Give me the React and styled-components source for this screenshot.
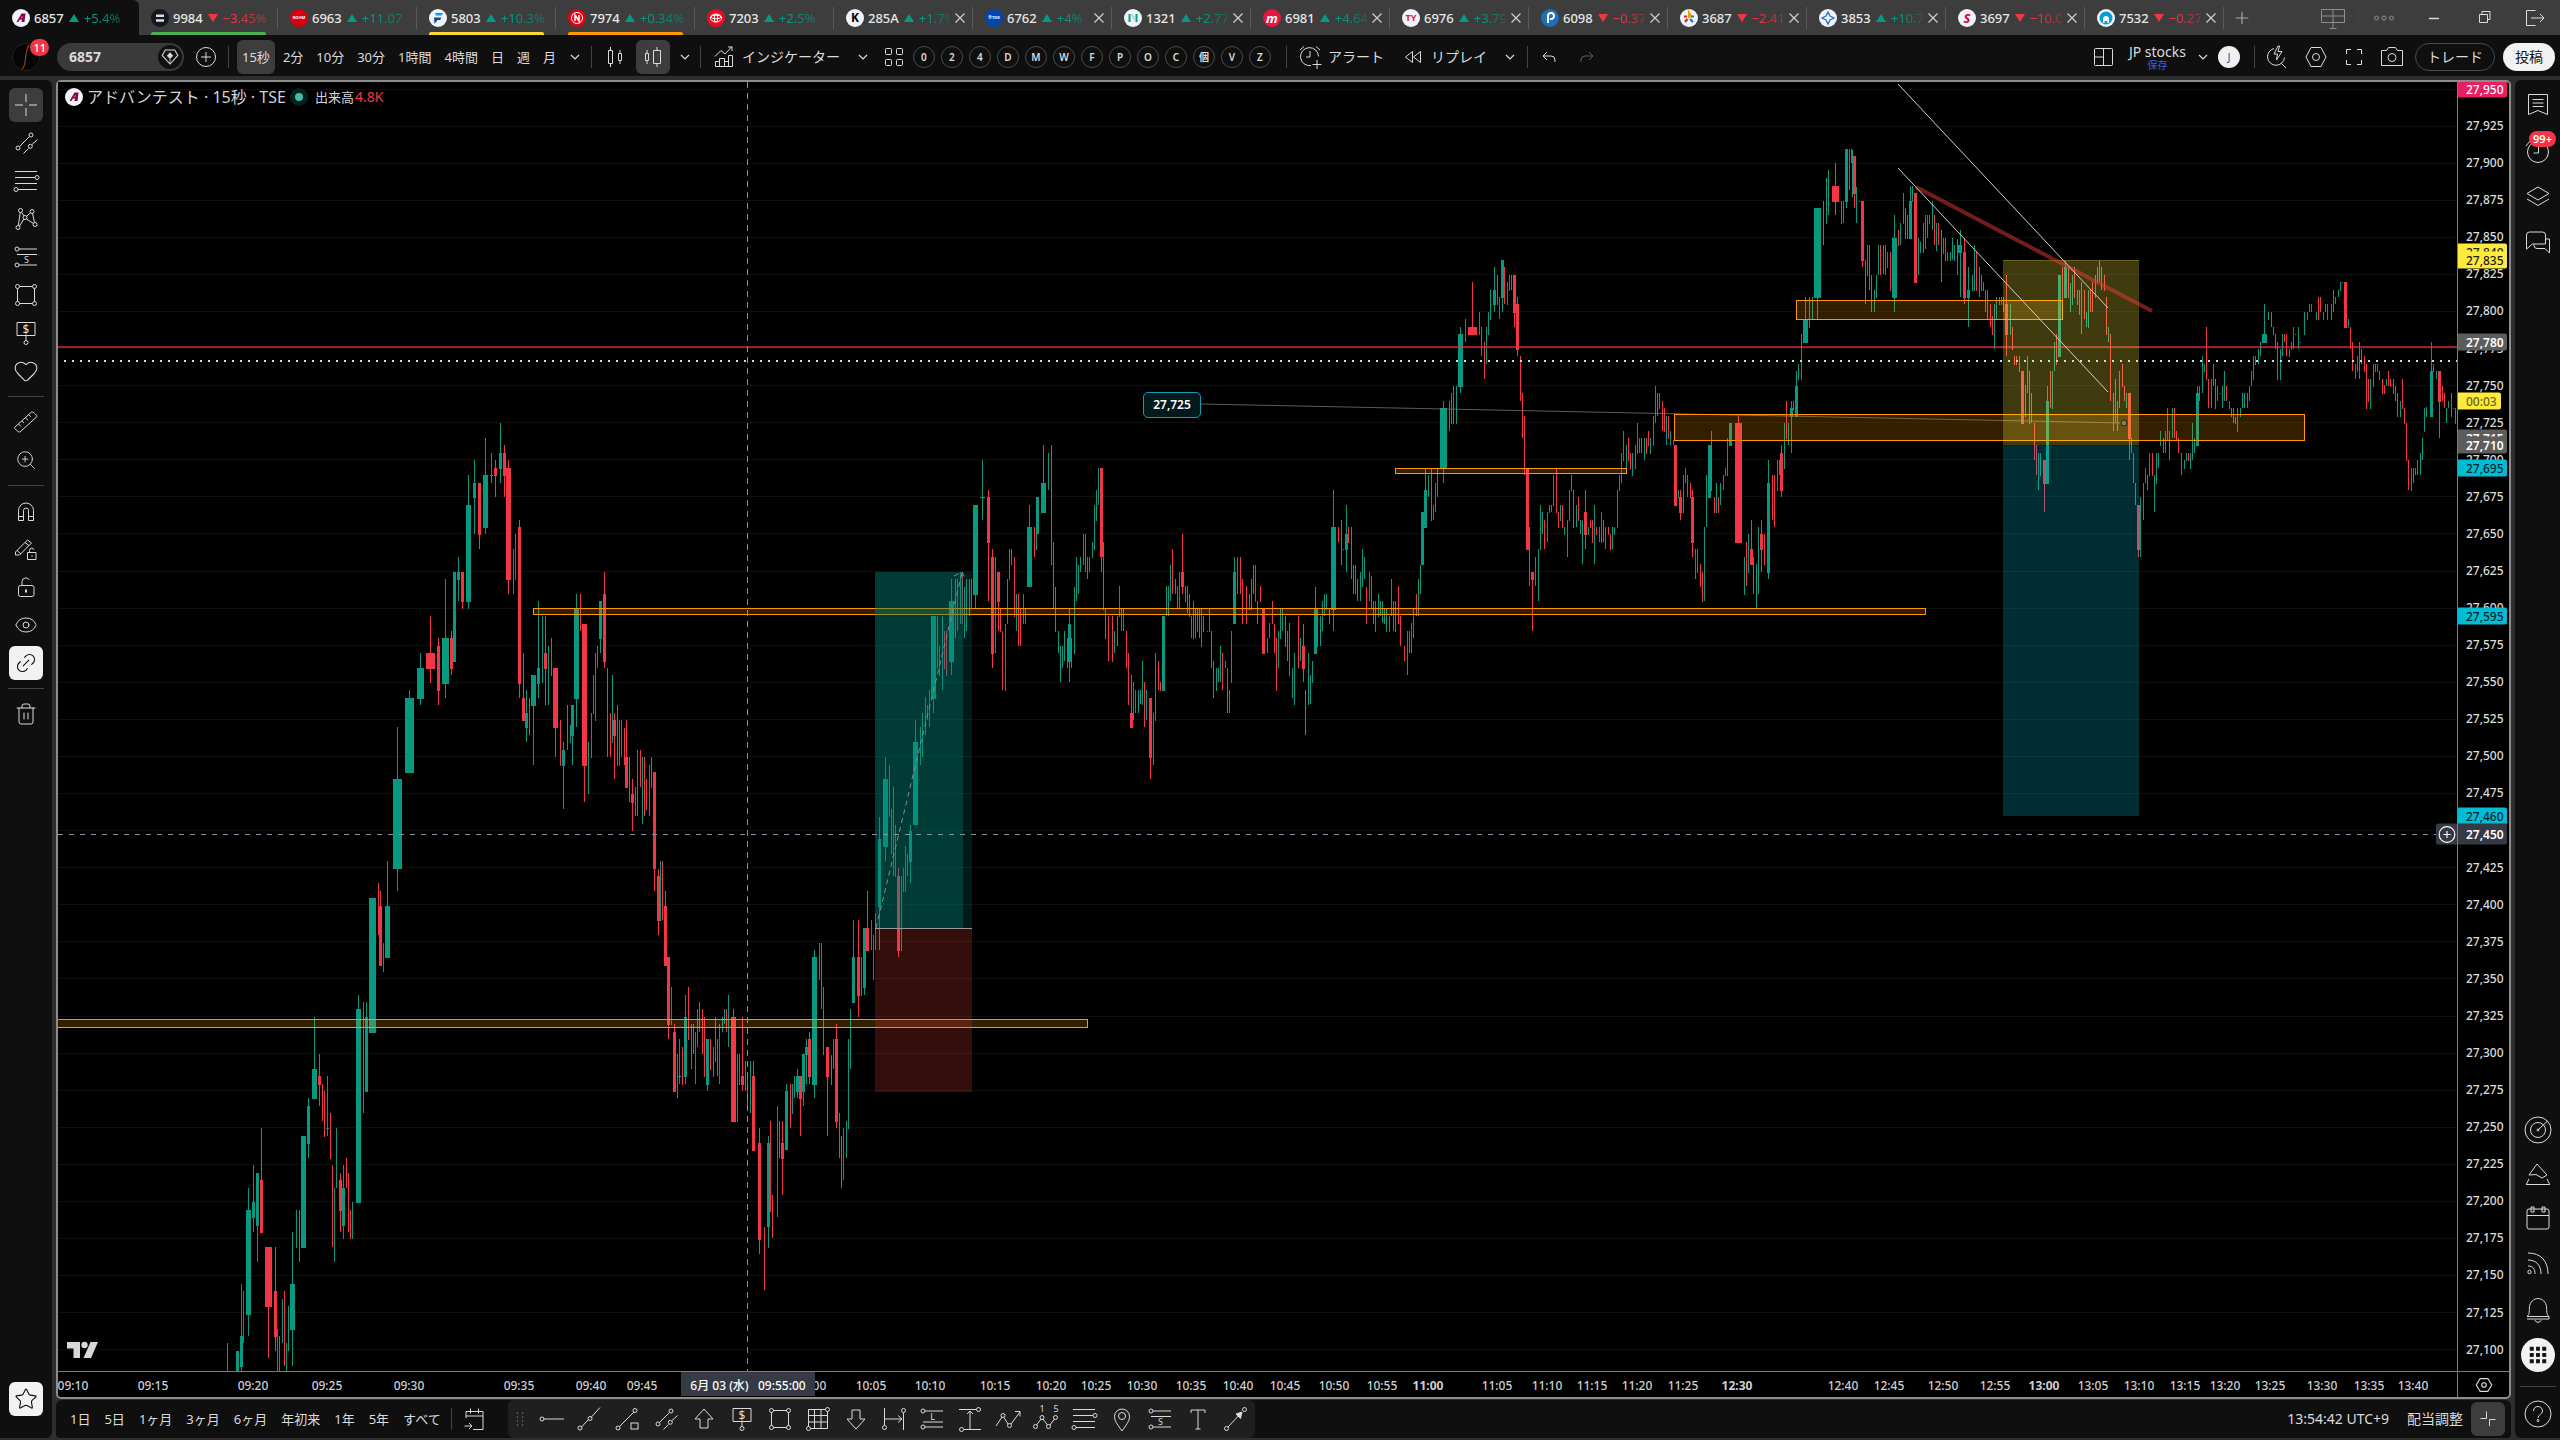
import React from "react";
import styled, { createGlobalStyle, css } from "styled-components";
import { Heart, Link2, Eye, ZoomIn, Trash2, Star } from "lucide-react";

const Global = createGlobalStyle`
  * { box-sizing: border-box; }
  body { margin: 0; background: #2e2e2e; color: #dbdbdb; overflow: hidden;
    font-family: "Noto Sans", "Noto Sans CJK JP", sans-serif; font-size: 14px; line-height: 20px; }
  button { font: inherit; color: inherit; background: none; border: 0; padding: 0; cursor: pointer; }
`;

const GREEN = "#089981";
const RED = "#f23645";

const Page = styled.div`display: flex; flex-direction: column; height: 100vh; width: 100%;`;

/* ---------- tab strip ---------- */
const TabStrip = styled.nav`display: flex; flex: none; height: 35px; background: #3d3d3d; align-items: stretch;`;
const Tab = styled.div`
  position: relative; width: 139px; flex: 0 1 139px; display: flex; align-items: center; gap: 4px;
  padding: 0 6px 0 12px; overflow: hidden; white-space: nowrap;
  ${(p) => p.$active && css`background: #0f0f0f; border-radius: 0 6px 0 0;`}
  ${(p) => p.$line && css`&::before { content: ""; position: absolute; right: 0; top: 7px; bottom: 6px; width: 1px; background: #5a5a5a; }`}
  ${(p) => p.$mark && css`&::after { content: ""; position: absolute; left: 12px; right: 12px; bottom: 0; height: 3px; border-radius: 2px 2px 0 0; background: ${p.$mark}; }`}
`;
const TabCode = styled.span`font-size: 13px; font-weight: 500; color: #e8e8e8;`;
const Arrow = styled.span`
  flex: none; width: 0; height: 0; margin: 0 1px; border: 5px solid transparent;
  ${(p) => (p.$up ? css`border-bottom: 8px solid ${GREEN}; border-top: 0;` : css`border-top: 8px solid ${RED}; border-bottom: 0;`)}
`;
const Change = styled.span`
  flex: 1; min-width: 0; overflow: hidden; font-size: 13px; color: ${(p) => (p.$up ? GREEN : RED)};
  mask-image: linear-gradient(90deg, #000 20%, rgba(0,0,0,.4) 100%);
`;
const Close = styled.button`flex: none; width: 14px; height: 20px; display: grid; place-items: center; color: #d0d0d0;`;
const StripEnd = styled.div`flex: 1; display: flex; align-items: center; justify-content: space-between; padding: 0 1px 0 10px; color: #a8a8a8;`;
const WindowKeys = styled.div`display: flex; align-items: center;`;
const WindowKey = styled.button`width: 50px; height: 35px; display: grid; place-items: center; color: ${(p) => (p.$dim ? "#8f8f8f" : "#dcdcdc")};`;
const Rule = styled.span`flex: none; width: 1px; height: 22px; background: #434343; margin: 0 ${(p) => p.$gap ?? 0}px;`;

/* ---------- main toolbar ---------- */
const Toolbar = styled.header`flex: none; height: 41px; display: flex; align-items: center; background: #0f0f0f; padding: 2px 5px 0 12px;`;
const Avatar = styled.button`position: relative; width: 28px; height: 28px; border-radius: 50%; background: #050505; border: 1px solid #222; display: grid; place-items: center; margin-right: 17px;`;
const Count = styled.span`
  position: absolute; top: -5px; right: -10px; min-width: 18px; height: 17px; padding: 0 3px; border-radius: 9px;
  background: ${RED}; color: #fff; font-size: 11px; line-height: 17px; font-weight: 500; text-align: center;
`;
const Search = styled.button`
  width: 127px; height: 28px; border-radius: 14px; background: #3a3a3a; display: flex; align-items: center;
  justify-content: space-between; padding: 0 2px 0 12px; font-size: 14px; font-weight: 700;
`;
const Knob = styled.span`width: 24px; height: 24px; border-radius: 50%; background: #111; display: grid; place-items: center;`;
const IconKey = styled.button`flex: none; width: ${(p) => p.$w ?? 38}px; height: 34px; display: grid; place-items: center; border-radius: 6px; background: ${(p) => (p.$on ? "#3d3d3d" : "none")}; color: ${(p) => (p.$dim ? "#5c5c5c" : "#dbdbdb")};`;
const Intervals = styled.div`display: flex; gap: 3px; margin-left: 8px;`;
const Interval = styled.button`flex: none; height: 34px; padding: 0 5px; border-radius: 6px; background: ${(p) => (p.$on ? "#3d3d3d" : "none")}; font-size: 13px; white-space: nowrap;`;
const TextKey = styled.button`flex: none; height: 34px; font-size: 14px; white-space: nowrap; display: flex; align-items: center; gap: 4px; padding: 0 6px 0 9px;`;
const Rounds = styled.div`display: flex; gap: 6px; margin: 0 15px 0 5px;`;
const Round = styled.button`width: 22px; height: 22px; border: 1px solid #4a4a4a; border-radius: 50%; font-size: 10px; line-height: 18px; font-weight: 600;`;
const Grow = styled.div`flex: 1;`;
const LayoutName = styled.button`display: flex; flex-direction: column; align-items: center; font-size: 14px; line-height: 16px; padding: 0 6px;`;
const Saved = styled.span`font-size: 10px; line-height: 10px; color: #2962ff;`;
const Initial = styled.span`width: 22px; height: 22px; margin: 0 14px 0 4px; border-radius: 50%; background: #f0f0f0; color: #1e5fa8; font-size: 11px; line-height: 22px; text-align: center;`;
const Pill = styled.button`
  height: 28px; border-radius: 14px; width: ${(p) => p.$w}px; font-size: 14px; line-height: 26px; margin-left: ${(p) => p.$gap ?? 0}px;
  ${(p) => (p.$solid ? css`background: #f2f2f2; color: #0f0f0f;` : css`border: 1px solid #4a4a4a;`)}
`;

/* ---------- body ---------- */
const Body = styled.div`flex: 1; min-height: 0; display: flex; gap: 4px; padding: 4px 0 2px; background: #2e2e2e;`;
const Side = styled.aside`
  flex: none; width: ${(p) => p.$w}px; display: flex; flex-direction: column; align-items: center; background: #0f0f0f;
  border-radius: ${(p) => (p.$left ? "0 6px 6px 0" : "6px 0 0 6px")}; padding: ${(p) => p.$pad};
`;
const ToolGroup = styled.div`display: flex; flex-direction: column; gap: 4px;`;
const Tool = styled.button`
  width: 34px; height: 34px; display: grid; place-items: center; border-radius: 6px; position: relative;
  ${(p) => p.$on && css`background: #3d3d3d;`}
  ${(p) => p.$white && css`background: #f2f2f2; color: #0f0f0f;`}
`;
const Divider = styled.hr`width: 36px; height: 1px; border: 0; background: #434343; margin: 8px 0;`;
const Widget = styled.button`position: relative; width: 45px; height: ${(p) => p.$h ?? 46}px; display: grid; place-items: center;`;
const Badge = styled.span`position: absolute; left: 14px; top: 3px; width: 27px; height: 16px; border-radius: 8px; background: ${RED}; color: #fff; font-size: 11px; line-height: 16px; font-weight: 600; text-align: center;`;
const AppsDisc = styled.span`width: 34px; height: 34px; border-radius: 50%; background: #f2f2f2; color: #0f0f0f; display: grid; place-items: center;`;

const Center = styled.main`flex: 1; min-width: 0; display: flex; flex-direction: column; gap: 1px;`;
const Frame = styled.section`flex: 1; min-height: 0; border: 2px solid #8c8c8c; border-radius: 5px; background: #000; display: grid; grid-template: 1fr 26px / 1fr 52px;`;
const Plot = styled.div`position: relative; min-width: 0; min-height: 0; overflow: hidden; background: #000;`;
const PlotSvg = styled.svg`position: absolute; inset: 0; width: 100%; height: 100%; display: block;`;
const Legend = styled.div`position: relative; display: flex; align-items: center; gap: 4px; padding: 0 7px; color: #d1d4dc; font-size: 16px; height: 30px;`;
const Status = styled.span`width: 18px; height: 18px; border-radius: 50%; background: #04221d; display: grid; place-items: center; margin-right: 3px; &::after { content: ""; width: 8px; height: 8px; border-radius: 50%; background: #42bda8; }`;
const Volume = styled.span`font-size: 13px; em { font-style: normal; font-size: 14px; color: ${RED}; margin-left: 1px; }`;
const Callout = styled.div`position: absolute; width: 58px; height: 26px; border: 1px solid #0f9fb4; border-radius: 5px; background: #04191c; color: #fff; font-size: 12px; line-height: 24px; font-weight: 600; text-align: center;`;
const Watermark = styled.svg`position: absolute; left: 8px; bottom: 11px;`;

const PriceAxis = styled.div`
  position: relative; border-left: 1px solid #7b7b7b; display: flex; flex-direction: column; justify-content: space-between;
  padding: 36px 0 13px 8px; font-size: 12px; line-height: 16px; font-weight: 500; color: #dbdbdb; overflow: hidden;
`;
const Tag = styled.span`
  position: absolute; left: 0; transform: translateY(-50%); width: ${(p) => p.$w ?? 49}px; height: ${(p) => p.$h ?? 17}px; line-height: ${(p) => p.$h ?? 17}px;
  padding-left: 8px; background: ${(p) => p.$bg}; color: ${(p) => p.$fg}; border-radius: 0 2px 2px 0; font-weight: ${(p) => (p.$strong ? 600 : 500)};
`;
const AddAlert = styled.button`position: absolute; right: 0; transform: translateY(-50%); width: 21px; height: 21px; background: #363a45; border-radius: 2px 0 0 2px; display: grid; place-items: center; && { color: #fff; }`;
const TimeAxis = styled.div`position: relative; border-top: 1px solid #7b7b7b; font-size: 12px; line-height: 27px; font-weight: 500; color: #cfcfcf; overflow: hidden;`;
const TimeLabel = styled.span`position: absolute; top: 0; transform: translateX(-50%); font-weight: ${(p) => (p.$strong ? 700 : 500)};`;
const TimeTag = styled.span`position: absolute; top: 0; transform: translateX(-50%); width: 134px; height: 24px; line-height: 27px; background: #363a45; color: #fff; text-align: center; white-space: pre;`;
const Corner = styled.button`&& { border-top: 1px solid #7b7b7b; border-left: 1px solid #7b7b7b; } display: grid; place-items: center;`;

const Footer = styled.footer`flex: none; height: 38px; display: flex; align-items: center; background: #0f0f0f; border-radius: 6px 6px 4px 4px; font-size: 13px; padding: 0 6px 0 14px;`;
const Ranges = styled.div`display: flex; gap: 14px; margin-right: 2px;`;
const Favourites = styled.div`display: flex; align-items: center; height: 38px; background: #1f1f1f; border-radius: 6px; margin-left: 18px; padding-left: 6px;`;
const Handle = styled.span`display: grid; width: 14px; margin-right: 5px; color: #777;`;
const FootText = styled.button`margin-right: ${(p) => p.$gap}px; font-size: 14px;`;

/* ---------- icons ---------- */
const Ico = ({ s = 28, w = 1, children, f = "none" }) => (
  <svg width={s} height={s} viewBox="0 0 28 28" fill={f} stroke="currentColor" strokeWidth={w} aria-hidden="true">{children}</svg>
);
const C = ({ x, y, r = 2 }) => <circle cx={x} cy={y} r={r} />;
const Glyph = ({ x, y, size = 11, children }) => (
  <text x={x} y={y} fontSize={size} textAnchor="middle" fill="currentColor" stroke="none">{children}</text>
);
const Chevron = () => <Ico s={14}><path d="M6 10l8 8 8-8" strokeWidth="2.4" /></Ico>;

const I = {
  cross: <Ico><path d="M14 3v8M14 17v8M3 14h8M17 14h8" /></Ico>,
  trend: <Ico><C x={6} y={19} /><C x={19} y={6} /><path d="M7.500 17.500l10-10M11.500 24.500l5-5M20 15.500l5.500-5" /><C x={18.300} y={17.300} /></Ico>,
  fib: <Ico><path d="M3 4.500h22M3 10.500h20M3 16.500h22M6 22.500h19" /><C x={25} y={10.500} /><C x={4} y={22.500} /></Ico>,
  xabcd: <Ico><C x={6} y={22.500} /><C x={8.500} y={5.500} /><C x={20} y={6.500} /><C x={23} y={19.500} /><C x={13} y={12.500} /><path d="M6.300 20.500l2-13M7.500 21l4.500-7M9.500 7.200l2.500 3.800M14.500 11.300l4-3.500M20.500 8.500l2 9M14.500 14l7 4.500" /></Ico>,
  forecast: <Ico><path d="M7 6h18M5 11.500h20M7 22h18" /><C x={5} y={6} /><C x={5} y={22} /><Glyph x={14.500} y={20} size={9}>S</Glyph></Ico>,
  forecastL: <Ico><path d="M7 6h18M5 17h20M7 22h18" /><C x={5} y={6} /><C x={5} y={22} /><Glyph x={14.500} y={15} size={9}>L</Glyph></Ico>,
  rect: <Ico><path d="M7.500 5.500h13M7.500 22.500h13M5.500 7.500v13M22.500 7.500v13" /><C x={5.500} y={5.500} /><C x={22.500} y={5.500} /><C x={5.500} y={22.500} /><C x={22.500} y={22.500} /></Ico>,
  note: <Ico><path d="M5 3.500h18v13h-18zM14 16.500v5" /><C x={14} y={23.500} /><Glyph x={14} y={14.500} size={12}>$</Glyph></Ico>,
  ruler: <Ico><path d="M2.500 19.500l17-15.500c1-.8 5 2.500 5.500 4.500l-17 15.500c-1 .8-5.500-3-5.500-4.500zM6.500 16l2.500 2.500M10 13l2 2M13.500 9.800l2.500 2.500M16.800 6.800l2 2" /></Ico>,
  magnet: <Ico><path d="M6.500 23.500v-10a7.500 7.500 0 0 1 15 0v10h-5v-10a2.500 2.500 0 0 0-5 0v10zM6.500 19.500h5M16.500 19.500h5" /></Ico>,
  pencil: <Ico><path d="M3.500 17l12-12 4 3-12 12h-4zM13 7.500l4 3M5 15.500l4 3.500" /><path d="M15.500 17.500h8.500v7h-8.500zM17.500 17.500v-2a2.300 2.300 0 0 1 4.500-.7M20 20.500v1.500" /></Ico>,
  lock: <Ico><rect x="6.500" y="12.500" width="15.500" height="11" rx="2" /><path d="M10 12.500v-4a4 4 0 0 1 7.500-1.500" /><path d="M14 16.500v3" strokeWidth="2" /></Ico>,
  hline: <Ico><path d="M6 14h20" /><C x={4} y={14} /></Ico>,
  ray: <Ico><path d="M5.500 22l7-7.500M15 12.500l9-10" /><C x={4} y={23} /><C x={14} y={13.500} /></Ico>,
  alertline: <Ico><path d="M5.500 21.500l14.500-14.500" /><C x={4} y={23} /><C x={21} y={5.500} /><rect x="17" y="18" width="7" height="6" /></Ico>,
  up: <Ico><path d="M14 4l9 10h-5v9h-8v-9h-5z" /></Ico>,
  down: <Ico><path d="M14 24l9-10h-5v-9h-8v9h-5z" /></Ico>,
  grid: <Ico><path d="M4.500 4.500h17M4.500 4.500v17M23.500 6.500v17M6.500 23.500h17M10.500 4.500v19M17 4.500v19M4.500 10.500h19M4.500 17h19" /><C x={23.500} y={4.500} /><C x={4.500} y={23.500} /></Ico>,
  daterange: <Ico><path d="M4.500 3v17M23.500 8v17M5 14h17M18 10.500l4 3.500-4 3.500" /><C x={4.500} y={22.500} /><C x={23.500} y={5.500} /></Ico>,
  pricerange: <Ico><path d="M3 4.500h17M8 24.500h17M14 24v-18M11 9l3-3 3 3" /><C x={22.500} y={4.500} /><C x={5.500} y={24.500} /></Ico>,
  zig: <Ico><path d="M2 21l6-9M10 12.500l4 6.500M17 19l9-12M21 6.500h5v5" /><C x={9} y={10.500} /><C x={15.500} y={20.500} /></Ico>,
  elliott: <Ico><C x={3.500} y={21.500} /><C x={10} y={12.500} /><C x={16.500} y={21.500} /><C x={23.500} y={12.500} /><path d="M4.500 20l4.500-6M11 14l4.500 6M18 20l4.500-6" /><Glyph x={10} y={7} size={9}>1</Glyph><Glyph x={24} y={7} size={9}>5</Glyph></Ico>,
  pin: <Ico><path d="M14 26c-4-6-7.500-9.500-7.500-14.500a7.500 7.500 0 0 1 15 0c0 5-3.500 8.500-7.500 14.500z" /><C x={14} y={11} r={3.500} /></Ico>,
  text: <Ico><path d="M7 8v-3h14v3M14 5v19M11.500 24h5" /></Ico>,
  arrow: <Ico><path d="M6 22l14-15" /><path d="M14 9l6-2-1.500 6.500z" fill="currentColor" /><C x={4.500} y={23.500} /><C x={22.500} y={4.500} /></Ico>,
  candles: <Ico><path d="M7.500 7.500h4v13h-4zM9.500 4v3.500M9.500 20.500v3.500M17.500 10.500h3v7h-3zM19 7v3.500M19 17.500v3.500" /></Ico>,
  hollow: <Ico><path d="M6.500 10.500h3v7h-3zM8 7v3.500M8 17.500v3.500M14.500 7.500h7v13h-7zM18 4v3.500M18 20.500v3.500" /></Ico>,
  indicators: <Ico><path d="M5.500 23.500v-5h4v-3h5v3h4v-6h4v11zM9.500 18.500v5M14.500 17.500v6M18.500 17.500v6M5 13.500l6-6 4 3.500 7-7.500M18 4h4v4" /></Ico>,
  apps: <Ico><rect x="5.500" y="5.500" width="6" height="6" rx="1" /><rect x="16.500" y="5.500" width="6" height="6" rx="1" /><rect x="5.500" y="16.500" width="6" height="6" rx="1" /><rect x="16.500" y="16.500" width="6" height="6" rx="1" /></Ico>,
  alarm: <Ico><path d="M15 22.500a9 9 0 1 1 7.500-9M14 8v6h-4M4 7l4-3.500M20 3.500l4 3.500M21 17v9M16.500 21.500h9" /></Ico>,
  rewind: <Ico><path d="M13.500 8.500v11l-7-5.500zM21.500 8.500v11l-7-5.500z" /></Ico>,
  undo: <Ico><path d="M12 9l-4 4 4 4M8 13h8a4 4 0 0 1 4 4v2" /></Ico>,
  redo: <Ico><path d="M16 9l4 4-4 4M20 13h-8a4 4 0 0 0-4 4v2" /></Ico>,
  layout: <Ico><rect x="4.500" y="5.500" width="18" height="17" rx="1" /><path d="M13.500 5.500v17M4.500 14h9" /></Ico>,
  quick: <Ico><path d="M12 5.500a8.500 8.500 0 1 0 10.500 9M19.500 20.500l4.500 4.500M16 3l-4 8h3.500l-1 6 5.500-8.500h-4l1.500-5.500z" /></Ico>,
  gear: <Ico><path d="M9 4.500h10l5 9.500-5 9.500h-10l-5-9.500z" /><C x={14} y={14} r={3.500} /></Ico>,
  full: <Ico><path d="M6.500 11v-4.500h4.500M17 6.500h4.500v4.500M21.500 17v4.500h-4.500M11 21.500h-4.500v-4.500" /></Ico>,
  camera: <Ico><path d="M3.500 7.500h5l2-3h7l2 3h5v15h-21z" /><C x={14} y={14.500} r={4} /></Ico>,
  plusc: <Ico><C x={14} y={14} r={9.500} /><path d="M14 9v10M9 14h10" /></Ico>,
  diamond: <Ico s={22}><path d="M8 5h12l4 7-10 11-10-11z" strokeWidth="1.300" /><path d="M14 8.500l3.500 4-3.500 3.500-3.500-3.500zM14 16v6" fill="currentColor" /></Ico>,
  list: <Ico><path d="M4.500 3.500h19v20l-9.500-4-9.500 4zM8.500 8.500h11M8.500 12h11M8.500 15.500h11" /></Ico>,
  clock: <Ico><C x={14} y={15} r={10.500} /><path d="M14.500 9v7h-5M2 9l4-5" /></Ico>,
  layers: <Ico><path d="M14 4l11 6.500-11 6.500-11-6.500zM3 16l11 6.500 11-6.500" /></Ico>,
  chat: <Ico><path d="M2.500 20v-14a3 3 0 0 1 3-3h13a3 3 0 0 1 3 3v9h-13zM10 15v1.500a3 3 0 0 0 3 3h8l4.500 4.500v-14h-4" /></Ico>,
  radar: <Ico><C x={14} y={14} r={13} /><C x={14} y={14} r={7.500} /><C x={14} y={14} r={1} /><path d="M14 14l9.500-9" /></Ico>,
  ideas: <Ico><path d="M2 24.500h24M5 19l-2.500 5M23 19l2.500 5M5 15l8-11 10 11-5 3-6-3.500z" /></Ico>,
  calendar: <Ico><rect x="3" y="5" width="22" height="20" rx="2" /><path d="M3 11.500h22M7 3h3v5h-3zM18 3h3v5h-3z" /></Ico>,
  rss: <Ico><C x={5.500} y={23} r={1.700} /><path d="M4 17c5 0 7 3 7 8M4 11c8 0 13 5 13 14M4 4c13 0 20 8 20 21" /></Ico>,
  bell: <Ico><path d="M3 21.500c3-2 2-6 2.500-10 .5-4 4-8 8.500-8s8 4 8.500 8c.5 4-.5 8 2.500 10zM3 24h22v-2.500M11 25c.5 3 5.500 3 6 0" /></Ico>,
  dots: <Ico s={22} f="currentColor">{[4, 12, 20].map((y) => [4, 12, 20].map((x) => <rect key={x + "-" + y} x={x} y={y} width="4" height="4" />))}</Ico>,
  help: <Ico><C x={14} y={14} r={13} /><path d="M9.500 11c0-6 9-6 9 0 0 3.500-4.500 3.500-4.500 7" /><C x={14} y={20.500} r={1} /></Ico>,
  collapse: <Ico><path d="M12.500 6.500v7h-6M15.500 21v-6.500h6" /></Ico>,
  goto: <Ico><path d="M5 13v-6.500h17v18h-10M5 11h17M9.500 3.500v5M17.500 3.500v5M3.500 21h7M8 18l3 3-3 3" /></Ico>,
  handle: <Ico s={14} f="currentColor">{[3, 11, 19, 27].map((y) => [7, 17].map((x) => <circle key={x + "-" + y} cx={x} cy={y - 1} r="1" />))}</Ico>,
  monitor: <Ico><path d="M2.500 5.500h23v13h-23zM14 5.500v19M2.500 12h23M10.500 24.500h7" /></Ico>,
  more: <Ico><C x={6.500} y={14} /><C x={14} y={14} /><C x={21.500} y={14} /></Ico>,
  min: <Ico><path d="M9 14.500h10" strokeWidth="1.500" /></Ico>,
  restore: <Ico><path d="M9.500 10.500h8v8h-8zM12 10.500v-3h8v8h-2.500" /></Ico>,
  exit: <Ico><path d="M15.500 6.500h-9v15h9M11 14h13M20 10l4 4-4 4" /></Ico>,
};

/* ---------- company badges ---------- */
const Disc = styled.span`
  flex: none; width: 18px; height: 18px; border-radius: 50%; background: ${(p) => p.$bg}; color: ${(p) => p.$fg};
  display: grid; place-items: center; overflow: hidden; font-weight: 700; line-height: 18px; font-size: ${(p) => p.$fs ?? 12}px;
`;
const Draw = ({ children }) => <svg width="18" height="18" viewBox="0 0 18 18" aria-hidden="true">{children}</svg>;
const LOGOS = {
  adv: [{ bg: "#f0f3fa", fg: "#8c0046" }, <Draw><path d="M4.500 13l5-8.500h4l-1 8.500h-3l.4-2.600h-2l-1.500 2.600zM9 8.700h1.200l.3-2z" fill="#8c0046" fillRule="evenodd" /></Draw>],
  bars: [{ bg: "#131722", fg: "#ddd" }, <Draw><path d="M5 5.500h8v2.500h-8zM5 10.200h8v2.500h-8z" fill="#ddd" /></Draw>],
  rohm: [{ bg: "#d7000f", fg: "#fff", fs: 4 }, "ROHM"],
  furu: [{ bg: "#f0f3fa", fg: "#0068b7" }, <Draw><path d="M6 4h8l-1.500 2.500h-5.500z" fill="#00a0e9" /><path d="M5 8.500h7.500l-1.500 2.500h-2.500l-3 4z" fill="#0a4a9a" /></Draw>],
  nin: [{ bg: "#e60012", fg: "#fff" }, <Draw><circle cx="9" cy="9" r="5.500" fill="none" stroke="#fff" /><path d="M7 12v-6l4 6v-6" fill="none" stroke="#fff" strokeWidth="1.500" /></Draw>],
  toy: [{ bg: "#eb0a1e", fg: "#fff" }, <Draw><g fill="none" stroke="#fff"><ellipse cx="9" cy="9" rx="5.500" ry="4" /><ellipse cx="9" cy="8" rx="5" ry="1.800" /><ellipse cx="9" cy="9" rx="1.800" ry="4" /></g></Draw>],
  kio: [{ bg: "#f0f3fa", fg: "#000", fs: 12 }, "K"],
  tdk: [{ bg: "#0046ad", fg: "#fff", fs: 4 }, "⊕TDK"],
  nom: [{ bg: "#f0f3fa", fg: "#00a085" }, <Draw><path d="M4.500 5h2v8h-2zM11.500 5h2v8h-2z" fill="#00a085" /><path d="M6.500 5l5 8v-3l-3-5z" fill="#9fdccf" /></Draw>],
  mur: [{ bg: "#e5173f", fg: "#fff", fs: 13 }, <i>m</i>],
  ty: [{ bg: "#f0f3fa", fg: "#d8232a", fs: 9 }, "TY"],
  rec: [{ bg: "#1d6fb8", fg: "#fff" }, <Draw><path d="M7 14v-7c0-4 6-4 6 0 0 3-3 3.500-4 2.500" fill="none" stroke="#fff" strokeWidth="2" /></Draw>],
  fix: [{ bg: "#f0f3fa", fg: "#fff" }, <Draw><path d="M9 3.500l2 3.500-2 1z" stroke="#e8a200" strokeWidth="2" fill="none" /><path d="M4 7.500l3 0M5 13l2.500-3" stroke="#d8232a" strokeWidth="2.200" /><path d="M14 7.500h-3" stroke="#1a9a4a" strokeWidth="2.200" /><path d="M13 13l-3-3" stroke="#1d6fd8" strokeWidth="2.200" /></Draw>],
  inf: [{ bg: "#f0f3fa", fg: "#2a6fc8" }, <Draw><path d="M9 3l2 4 4 2-4 2-2 4-2-4-4-2 4-2z" fill="none" stroke="#2a6fc8" strokeWidth="1.300" /></Draw>],
  shift: [{ bg: "#f0f3fa", fg: "#d7002a", fs: 13 }, <i>S</i>],
  ppih: [{ bg: "#f0f3fa", fg: "#0aa" }, <Draw><circle cx="9" cy="9" r="6.500" fill="#00a0e0" /><path d="M6 14v-4a3 3 0 0 1 6 0v4z" fill="#fff" /><path d="M7.500 14v-2h3v2z" fill="#00a0e0" /></Draw>],
};
const Logo = ({ id }) => {
  const [p, art] = LOGOS[id];
  return <Disc $bg={p.bg} $fg={p.fg} $fs={p.fs}>{art}</Disc>;
};

const TABS = [
  ["6857", 1, "+5.4%", "adv", 0], ["9984", 0, "−3.45%", "bars", 0, "#4caf50"], ["6963", 1, "+11.07", "rohm", 0],
  ["5803", 1, "+10.3%", "furu", 0, "#fdd835"], ["7974", 1, "+0.34%", "nin", 0, "#ff9800"], ["7203", 1, "+2.5%", "toy", 0],
  ["285A", 1, "+1.7%", "kio", 1], ["6762", 1, "+4%", "tdk", 1], ["1321", 1, "+2.77", "nom", 1], ["6981", 1, "+4.64", "mur", 1],
  ["6976", 1, "+3.79", "ty", 1], ["6098", 0, "−0.37", "rec", 1], ["3687", 0, "−2.41", "fix", 1], ["3853", 1, "+10.7", "inf", 1],
  ["3697", 0, "−10.0", "shift", 1], ["7532", 0, "−0.27", "ppih", 1],
];

/* ---------- chart data ----------
   Each run of bars has its own origin and scale. A bar is
   colour x high low [bodyTop bodyBottom bodyWidth]. */
const RUNS = [
  { ox: 200, oy: 400, sx: 2.8, sy: 1.568, bars: `g 77 1479 1523;g 105 1491 1523 1491 1523 8;g 116 1386 1523 1468 1516 8;g 121 1397 1479;g 136 1236 1468 1270 1435 14;g 150 1200 1305 1258 1283 8;g 161 1212 1352 1212 1295 8;r 172 1142 1306 1223 1306 8;r 192 1328 1502 1328 1422 20;r 211 1328 1491 1397 1469 8;g 217 1457 1523;r 222 1468 1523;g 231 1410 1479;r 236 1397 1515;g 242 1479 1523;g 248 1421 1491;g 259 1305 1515 1386 1458 14;g 270 1270 1330;r 278 1270 1352;g 290 1154 1330 1154 1330 14;g 304 1094 1189 1107 1167 8;g 320 967 1096 1049 1096 14;r 334 1025 1107 1060 1074 9;r 343 1073 1131;r 348 1083 1156;g 357 1060 1154 1142 1143 8;r 365 1118 1190;r 371 1200 1328;g 376 1236 1352;g 382 1142 1236;r 393 1212 1305 1223 1272 8;g 402 1200 1316 1236 1295 8;r 410 1189 1236;r 416 1212 1305;r 421 1270 1316;g 427 1258 1316;g 444 933 1259 955 1259 14;r 457 944 1118;g 466 944 1085 967 1085 8;g 483 781 993 781 993 20;r 499 757 839;r 505 770 887 793 887 9;g 513 851 897;g 525 723 875 793 875 14;g 553 513 770 594 735 26;g 587 455 585 467 585 25;g 617 397 478 420 469 19;r 645 339 444 397 422 25;r 668 373 478 386 456 8;g 687 281 467 373 445 19;r 704 362 431 373 422 8;g 712 270 411 270 411 9;g 723 246 315 270 282 8;r 735 270 328 270 317 8;g 752 118 328 165 317 14;g 768 94 210 130 154 9;r 782 130 234 130 212 9;g 799 60 210 118 201 14;g 816 83 130 118 119 8;r 827 94 152 107 119 9;g 841 36 130 83 108 9;r 852 71 152 83 119 9;r 864 94 304 107 282 14;g 877 234 304;g 883 210 282;r 894 188 467 199 445 9;r 906 397 503 467 503 8;g 914 455 536 491 514 8;r 922 467 525;g 934 431 572 431 480 14;g 948 315 467 420 445 8;g 959 339 444;r 967 339 478 397 422 9;g 975 386 478;r 985 373 433;r 995 420 560 420 514 14;r 1009 502 574;g 1018 536 641 549 574 8;r 1029 478 549;g 1037 510 538;g 1042 478 572 478 527 11;g 1054 304 513 327 469 14;r 1065 304 362;r 1077 351 630 351 574 14;g 1088 536 618;g 1096 491 561;g 1101 431 492;g 1107 397 503;g 1113 386 420;g 1121 315 397 315 375 8;r 1132 270 420 304 411 9;r 1141 420 560;r 1150 491 560;g 1155 431 538;r 1160 491 594 502 527 9;r 1169 478 574;g 1174 502 574;g 1180 502 560;r 1188 514 572;r 1194 502 608 560 608 8;r 1202 560 630;r 1211 594 676 618 632 8;g 1220 607 652;g 1225 549 652;r 1233 549 607;g 1239 560 665;r 1245 560 652;r 1251 594 643;g 1258 572 652;r 1265 560 608;r 1273 583 770 583 735 9;r 1284 735 839 746 817 9;g 1289 723 817;r 1295 723 815;r 1303 770 887 793 887 9;r 1312 873 1002 873 980 8;g 1320 920 980;r 1328 978 1085 991 1085 9;g 1337 1025 1094;g 1342 1002 1073 1060 1061 9;r 1351 1014 1074;g 1359 933 1073 967 1062 9;r 1368 920 1004;r 1376 978 1049;r 1381 978 1025;g 1387 991 1073;g 1393 955 1014;r 1398 944 991;r 1407 955 1025;r 1412 967 1062;g 1421 1002 1083 1002 1074 8;r 1429 1002 1050;g 1437 1014 1062;g 1443 967 1038;r 1449 1002 1060;g 1454 978 1073;g 1463 967 991;g 1468 955 978;r 1474 955 991;g 1480 933 1014;r 1494 955 1132 967 1132 14;g 1505 1025 1132;r 1510 1025 1074;r 1519 967 1083 1060 1074 8;r 1528 1036 1083;r 1533 1060 1105;g 1541 1036 1118;r 1550 1036 1178 1060 1178 8` },
  { ox: 740, oy: 380, sx: 2.063, sy: 1.912, bars: `r 40 1430 1672 1459 1644 6;r 50 1620 1740;g 59 1446 1660 1459 1620 6;r 63 1417 1590;r 67 1558 1640;g 77 1388 1600;r 82 1417 1488;r 88 1417 1558 1459 1490 6;g 96 1346 1473 1360 1473 6;r 104 1346 1430;g 108 1346 1403;g 112 1331 1373;g 119 1318 1373 1331 1361 7;r 125 1331 1446 1331 1375 6;g 131 1289 1388 1289 1361 6;g 137 1260 1346 1275 1290 7;r 143 1246 1346 1260 1333 6;g 154 1090 1373 1103 1348 10;g 164 1077 1147;g 168 1077 1203;r 172 1161 1290;r 180 1275 1446 1275 1333 6;r 189 1290 1348;g 193 1260 1318;r 199 1231 1430 1260 1419 6;r 205 1402 1488;r 209 1446 1545;g 214 1430 1530;g 220 1417 1488;g 224 1260 1432;g 228 1203 1318;g 234 1033 1191 1103 1191 6;r 244 1033 1218 1103 1178 7;g 251 1103 1178;g 257 1048 1176 1048 1163 7;r 263 977 1092 1048 1092 6;g 271 1033 1090;g 275 1061 1147;g 280 1019 1090;g 288 835 1090 878 1008 6;g 300 721 920 763 893 10;r 308 736 835;r 313 820 907;r 317 778 948;r 321 850 950;r 327 933 1104 948 1092 6;g 333 948 1092;g 337 933 978;g 341 891 978;r 346 907 948;g 352 850 962 862 922 6;g 362 650 851 692 851 10;g 372 664 736;g 376 637 721;g 383 607 678;g 387 622 650;g 391 593 664;g 399 451 637 451 610 10;r 408 451 552;g 412 508 565;g 418 451 593;r 422 480 552;r 426 480 565;g 436 381 564 423 539 10;r 445 381 493;g 449 381 480;g 454 367 467;r 458 367 467;g 463 395 493;g 467 381 480;r 473 381 451;r 478 381 436;g 486 239 436 239 411 10;g 500 153 268 224 225 10;r 513 210 423 224 312 6;r 521 323 551 338 524 6;g 527 338 522;r 533 367 480 367 425 5;r 537 436 482;r 542 480 593;g 548 467 595;g 552 381 467;g 556 323 382;g 560 323 353;r 566 338 453;g 571 410 480;r 575 410 508;r 579 436 508;g 585 410 467;g 589 436 467;g 597 239 396 281 396 10;r 608 281 338;g 611 224 325;g 613 224 294 224 294 8;g 626 124 254 197 254 10;g 637 140 210;r 643 124 353;r 647 310 436;r 651 395 482;g 657 480 522;g 661 508 578;g 665 508 551;g 669 480 537;r 676 493 551;g 680 436 578 467 539 6;r 684 493 551;g 690 395 524;g 694 338 423;g 698 353 410;g 702 338 367;g 709 294 353;r 713 294 367;g 717 338 381;g 721 338 367;g 727 310 340;g 731 239 325;g 736 210 270;g 740 168 239;r 746 168 367 168 339 6;r 750 310 440;r 754 436 495;r 760 451 537;r 768 451 539;g 772 480 522;g 779 451 508;g 783 394 453;g 787 436 480;g 791 436 480;r 797 480 551;r 802 522 622;r 808 564 665 637 665 6;g 812 578 650;g 816 593 637;g 822 593 637;g 826 593 620;g 830 537 622;r 835 578 664;g 839 593 651;r 847 608 763 608 723 6;g 853 637 736;g 857 522 652;r 863 537 593;r 868 578 595;g 874 451 595 451 595 6;g 880 394 451;g 884 394 451;g 888 353 423;r 892 323 410;r 898 381 410;g 903 394 436;g 907 367 436;r 913 294 410 367 396 6;r 919 394 425;r 923 394 445;g 927 410 453;g 931 451 493;g 936 423 495;r 940 436 493;g 944 436 482;r 948 436 493;g 953 436 510;r 957 451 482;g 964 480 482;g 969 436 482;r 973 480 551;r 977 537 608;g 983 551 595;g 987 551 578;g 991 508 578;r 996 522 593;g 1002 537 551;r 1006 551 637;g 1010 593 637;g 1014 480 580;g 1020 338 467 367 467 5;g 1026 338 410;r 1033 338 410;r 1037 381 467;r 1045 394 467;r 1051 410 439;g 1055 381 439;g 1059 353 410;g 1064 353 425;r 1068 423 467;r 1074 394 425;r 1080 436 524 436 524 6;g 1088 493 522;g 1092 465 493;r 1099 423 467;r 1103 467 522;r 1107 493 595;g 1111 480 551;g 1115 436 495;g 1119 436 480;r 1125 451 510;r 1129 480 537;r 1134 465 566;g 1140 551 608;g 1144 522 622;r 1152 451 551;g 1157 493 537;r 1163 467 578 508 553 5;r 1167 593 679;g 1173 522 622;g 1177 564 620;g 1181 537 580;g 1187 395 524 436 524 6;r 1191 436 510;g 1198 451 508;g 1202 423 480;g 1206 410 451;g 1210 410 439;r 1216 436 467;g 1224 210 480 281 439 10;r 1235 281 310;r 1241 268 353;g 1245 323 325;g 1251 239 367 294 325 5;r 1256 281 312;r 1262 281 381;r 1266 353 410;g 1270 353 410;r 1274 381 423;g 1280 367 423;g 1284 323 395;g 1288 338 381;r 1293 395 467;g 1299 367 423;r 1303 374 436;r 1307 423 467;g 1311 423 482;g 1317 410 453;g 1321 423 451;g 1326 423 465;g 1330 436 467;g 1334 436 482;g 1340 451 482;g 1344 381 451;g 1348 423 480;g 1352 423 482;r 1359 394 467;r 1363 451 508;r 1370 508 537;g 1377 480 564;g 1381 480 522;g 1386 465 522;g 1390 436 493;r 1396 410 451;g 1400 381 451;g 1404 353 410` },
  { ox: 1380, oy: 200, sx: 2.8, sy: 3, bars: `g 119 936 1095 936 1095 8;g 127 806 984 870 984 9;g 136 825 891;r 144 806 963;g 150 915 960;g 155 849 936;g 161 806 891;g 178 603 849 624 806 20;g 194 603 693;g 200 579 671;r 205 558 672;g 214 558 672;g 225 381 579 402 561 14;g 239 357 426;r 259 246 405 381 405 26;g 278 336 405;r 284 381 468;r 292 426 537;g 298 381 492;g 304 336 405;g 309 270 360;g 320 201 336 270 315 8;r 329 225 315;g 334 291 357;g 343 180 336 180 294 9;r 348 201 312;g 357 246 315;g 362 225 273;r 368 225 270;r 377 225 381 225 339 9;r 385 291 468 312 450 9;r 394 468 603;r 399 579 714;r 405 648 825;r 413 806 1050 806 1050 9;r 418 981 1158;r 427 1116 1293 1116 1140 8;g 435 1071 1158;g 444 1047 1203;g 449 915 1050;g 455 936 1002;r 460 960 1047;g 469 936 1026;g 474 915 939;g 480 915 936;g 486 825 918;r 494 806 939;r 500 936 984;g 505 915 963;r 511 915 984;g 516 981 1005;g 525 960 1071;g 530 870 963;g 536 825 873;r 542 870 984;g 550 915 981;r 555 891 963;g 561 960 1002;g 567 960 1092;r 575 870 1047 936 1005 9;g 583 981 1005;r 589 960 984;r 595 960 1029;g 600 915 1092;r 606 981 1005;g 614 981 1026;g 620 936 1029;r 625 960 1026;g 631 981 1047;r 640 981 1005;r 645 1002 1050;g 651 981 1047;g 656 981 1005;g 665 870 984;g 671 825 873;g 676 759 849;g 682 693 783;g 690 735 806;r 695 714 783;r 701 759 807;g 707 759 828;g 715 735 807;g 721 669 762;g 726 714 759;r 732 714 759;g 740 714 780;r 746 714 762;r 752 693 738;g 757 714 762;g 766 648 738;g 771 558 669;r 777 579 648;g 782 579 627;r 791 603 693;r 797 624 696;g 802 648 735;r 808 648 717;g 813 693 735;g 822 720 735;r 828 735 918 735 918 9;g 836 870 893;r 842 870 960 891 939 9;g 850 825 939;g 855 804 849;g 861 825 891;r 869 849 894;r 875 870 1071 891 1029 8;g 883 1047 1137;g 889 1047 1119;r 897 1092 1161;r 903 1116 1206;g 908 981 1203;g 914 825 981;g 923 735 894 735 894 9;r 928 693 873;r 936 891 939;g 942 849 939;r 948 891 939;g 953 849 915;g 961 825 870;g 967 804 828;g 972 714 828;g 981 669 738 669 738 9;r 1004 648 1029 669 1029 20;g 1021 1071 1185;r 1026 1026 1158;g 1032 1002 1119;r 1040 960 1095 1047 1095 8;r 1046 1071 1182;g 1054 1092 1224;g 1060 981 1182;r 1068 960 1116 1002 1050 8;r 1076 1002 1095;g 1088 780 1137 849 1119 8;r 1099 825 960;r 1104 825 981;g 1113 780 873;g 1118 780 825;r 1124 735 891 759 873 8;g 1132 669 807;r 1138 603 717;g 1144 669 735;g 1152 603 759 624 651 9;g 1158 603 630;g 1166 513 651 558 651 8;g 1172 492 540;g 1180 402 540;g 1191 291 429 359 429 14;g 1202 291 384;g 1211 291 357;g 1225 24 357 24 294 20;r 1241 3 135;g 1250 -66 72;g 1256 -90 45;r 1275 -110 45 -42 6 18;r 1292 3 72;g 1297 3 69;g 1306 -140 24 -40 6 8;g 1314 -150 -30;g 1322 -150 -10;r 1328 -60 24;g 1334 -40 69` },
  { ox: 1840, oy: 70, sx: 2.45, sy: 3, bars: `g 16 237 413 237 396 8;g 23 237 348;r 28 237 279;r 36 258 414 258 372 7;g 40 369 459;r 47 393 396;r 55 393 591 393 573 8;r 62 570 702;g 67 525 618;r 72 525 660;r 77 615 726;g 84 660 726;g 89 615 684;g 95 525 615;r 100 525 615;g 106 525 612;g 111 525 615;g 116 546 594;r 124 546 663;g 134 435 726 504 684 13;r 144 480 528;g 148 459 525;g 155 369 462;r 160 414 507;r 166 435 507;g 173 348 507 393 507 7;g 178 348 395;r 185 369 639 369 639 8;g 192 504 615;g 197 516 550;g 204 459 550;g 210 435 537;g 215 435 504;g 219 435 462;g 226 393 480;r 232 435 525;g 236 459 543;r 241 459 525;r 249 480 636;g 253 504 552;g 258 504 573;g 264 546 573;g 270 546 573;g 275 504 570;g 281 525 573;g 287 507 615;g 292 525 549 525 549 12;g 295 480 681;r 305 504 702 546 684 7;g 314 591 771 660 684 7;g 324 615 663;g 330 525 663;r 334 546 663;r 341 591 681;r 346 615 663;r 352 636 663;r 357 660 726;r 362 660 750;r 368 702 771;r 374 738 795;g 378 702 837;g 383 681 750;r 390 681 705;g 395 681 705;r 400 681 726;r 408 615 858 702 795 8;g 418 702 795;r 422 771 840;r 428 858 885;r 433 858 885;r 440 858 906;r 447 903 1062 903 1062 8;g 454 945 1041;g 460 858 969;r 464 903 1062;r 469 969 1059;r 476 1059 1170;r 481 1125 1215;g 487 1150 1260;g 491 1148 1218;r 501 1170 1326 1170 1242 8;g 509 948 1242 993 1242 7;r 515 903 1014;g 520 903 1017;g 526 816 903;r 531 792 885;g 538 615 861 615 861 7;r 545 591 705;g 553 570 684 591 684 7;r 560 591 683;g 564 640 726;g 570 615 705;r 575 591 684;r 582 660 705;g 587 660 735;g 591 636 792;r 599 660 747;g 604 726 771;g 609 660 774;r 614 660 726;r 618 636 726;g 626 615 683;g 630 591 640;r 636 570 637;r 641 591 660;r 648 615 663;r 653 681 795;g 658 771 816;r 663 792 993;r 670 969 1083;g 675 927 1055;r 680 993 1083;g 685 903 1014;r 692 882 950;r 697 948 993;g 703 969 1014;r 710 969 1170 969 1107 8;r 714 1104 1148;r 719 1148 1239;r 724 1239 1305;r 732 1305 1461 1305 1440 7;g 736 1281 1461;g 743 1239 1350;g 748 1194 1239;r 753 1215 1260;g 758 1150 1218;r 765 1150 1218;g 770 1215 1326;g 775 1150 1242;g 780 1150 1194;g 785 1083 1128;r 792 1104 1150;g 797 1083 1150;g 802 1014 1110;r 807 1083 1170;g 814 1014 1104;r 819 1014 1104;r 824 1083 1110;r 830 1104 1150;r 837 1150 1215;g 843 1170 1197;g 848 1150 1172;r 853 1150 1172;g 858 1150 1197;g 863 1059 1170;g 868 1104 1150;g 876 948 1128 969 1128 8;g 881 948 993;g 887 858 969;g 893 882 906;r 898 771 930;r 903 927 1014;g 909 927 1014;r 914 882 948;r 920 927 1017;g 926 948 993;g 932 969 972;g 937 948 1014;g 942 903 993;r 947 948 993;g 954 993 1017;r 958 1014 1041;r 964 1014 1059;r 969 1041 1062;g 974 1014 1086;g 980 1014 1041;g 986 969 1014;g 992 969 1014;g 998 969 1014;g 1003 948 993;g 1008 903 948;g 1013 858 930;g 1019 858 885;g 1025 837 882;g 1030 816 858;g 1040 702 819 792 819 12;g 1050 726 750;r 1056 726 771;r 1062 771 795;r 1067 792 837;r 1073 816 930;g 1079 837 930;g 1084 792 858;r 1089 792 816;r 1094 792 858;g 1101 837 861;g 1106 816 840;g 1111 771 837;g 1117 792 795;g 1123 771 837;g 1128 816 819;g 1138 726 795;g 1145 726 750;g 1150 702 726;g 1156 702 726;g 1167 726 750;r 1173 681 750;r 1178 681 726;g 1184 726 750;g 1189 702 726;g 1194 702 750;g 1204 702 750;g 1209 660 726;g 1214 681 702;g 1221 660 681;g 1227 636 663;g 1232 636 639;r 1239 636 774 636 774 8;g 1246 747 774;r 1251 771 837;r 1256 816 903;g 1263 882 927;g 1268 858 906;g 1273 816 927;r 1278 837 882;r 1284 858 906;r 1290 882 1017;r 1294 927 995;g 1300 927 1017;g 1307 882 950;g 1312 882 906;g 1317 882 906;r 1322 903 930;r 1328 927 972;r 1334 945 972;g 1339 927 948;r 1344 903 948;r 1349 927 950;r 1356 927 972;r 1361 948 993;r 1367 969 1041;g 1372 993 1041;r 1378 927 1017;r 1384 1014 1062;r 1388 1059 1172;r 1393 1170 1260;g 1400 1194 1263;r 1405 1194 1239;g 1410 1194 1215;g 1416 1170 1215;g 1422 1150 1215;g 1427 1104 1170;g 1432 1014 1086;g 1437 1010 1040;g 1449 816 1041 903 1041 8;g 1454 882 906;g 1461 903 927;r 1469 903 1104 903 996 7;r 1475 948 993;r 1480 969 1014;g 1486 1014 1059;g 1492 993 1014;r 1497 969 1041;g 1503 1014 1017;r 1508 1014 1062` },
];

const candlePath = (want) => {
  let d = "";
  const box = (x, y, w, h) => { d += `M${x} ${y}h${w}v${h}h${-w}z`; };
  RUNS.forEach(({ ox, oy, sx, sy, bars }) => {
    const Y = (v) => Math.round(oy + v / sy);
    bars.split(";").forEach((b) => {
      const [c, ...n] = b.split(" ");
      if (c !== want) return;
      const [x, hi, lo, top, bottom, w] = n.map(Number);
      const cx = Math.floor(ox + x / sx);
      box(cx, Y(hi), 1, Math.max(1, Y(lo) - Y(hi)));
      if (w) {
        const half = Math.max(1, Math.round((w / sx - 1) / 2));
        box(cx - half, Y(top), half * 2 + 1, Math.max(1, Y(bottom) - Y(top)));
      }
    });
  });
  return d;
};

const VIEW = { x: 58, y: 82, w: 2399, h: 1289 };
const py = (y) => `${((y - VIEW.y) / VIEW.h) * 100}%`;
const px = (x) => `${((x - VIEW.x) / VIEW.w) * 100}%`;
const GRID = Array.from({ length: 35 }, (_, i) => Math.round(88.5 + i * 37.08));
const ZONES = [[50, 1019, 1038, 9], [533, 608, 1393, 7], [1395, 468, 232, 6], [1674, 414, 631, 27], [1796, 300, 267, 20]];

const Chart = () => (
  <PlotSvg viewBox={`${VIEW.x} ${VIEW.y} ${VIEW.w} ${VIEW.h}`} preserveAspectRatio="none" role="img" aria-label="15秒足チャート">
    <g shapeRendering="crispEdges">
      {GRID.map((y) => <rect key={y} x="58" y={y} width="2399" height="1" fill="#0e0e0e" />)}
      <path d={candlePath("g")} fill={GREEN} />
      <path d={candlePath("r")} fill={RED} />
      <rect x="58" y="346" width="2399" height="2" fill={RED} opacity=".62" />
      <path d="M64 361H2457" stroke="#b2ebf2" strokeWidth="2" strokeDasharray="2 6" />
    </g>
    <path d="M1201 404L2124 423" stroke="#808080" strokeOpacity=".7" />
    <g shapeRendering="crispEdges">
      {ZONES.map(([x, y, w, h]) => <rect key={x} x={x + 0.5} y={y + 0.5} width={w - 1} height={h - 1} fill="#ff9800" fillOpacity=".2" stroke="#ff9800" />)}
      <rect x="875" y="572" width="88" height="357" fill="#00897b" fillOpacity=".3" />
      <rect x="875" y="572" width="97" height="357" fill="#00897b" fillOpacity=".2" />
      <rect x="875" y="929" width="97" height="163" fill="#f44336" fillOpacity=".21" />
      <rect x="875" y="928" width="97" height="1" fill="#9a9a9a" />
      <rect x="2003" y="260" width="136" height="185" fill="#ffeb3b" fillOpacity=".25" />
      <rect x="2003" y="260" width="136" height="1" fill="#6e6518" />
      <rect x="2003" y="445" width="136" height="371" fill="#00bcd4" fillOpacity=".24" />
    </g>
    <path d="M876 928L962 573M954 576L962 572 966 580" stroke="#8a8a8a" strokeDasharray="5 4" fill="none" />
    <path d="M1916 187L2152 311" stroke="#e53935" strokeOpacity=".5" strokeWidth="4" />
    <path d="M1898 84L2108 308M1898 168L2108 392" stroke="#d0d0d0" strokeWidth="1" />
    <circle cx="2124" cy="423" r="3" fill="#8a7a5a" stroke="#222" />
    <g shapeRendering="crispEdges" stroke="#8592a3">
      <path d="M747.500 82V1371" strokeDasharray="6 5" />
      <path d="M58 834.500H2436" strokeDasharray="5 6" />
    </g>
  </PlotSvg>
);

const PRICES = Array.from({ length: 34 }, (_, i) => (27925 - i * 25).toLocaleString("en-US"));
const TAGS = [
  [348, "27,775", "#000", "#dbdbdb"], [89, "27,950", "#e91e63", "#fff"], [252, "27,840", "#ffeb3b", "#222"], [260, "27,835", "#ffeb3b", "#222"],
  [342, "27,780", "#5d5d5d", "#fff", 1], [401, "00:03", "#ffeb3b", "#6b6320", 0, 43], [438, "27,715", "#5d5d5d", "#fff", 1], [445, "27,710", "#5d5d5d", "#fff", 1],
  [468, "27,695", "#00bcd4", "#06262b"], [616, "27,595", "#00bcd4", "#06262b"], [816, "27,460", "#00bcd4", "#06262b"], [834, "27,450", "#363a45", "#fff", 1, 49, 21],
];
const TIMES = [[73, "09:10"], [153, "09:15"], [253, "09:20"], [327, "09:25"], [409, "09:30"], [519, "09:35"], [591, "09:40"], [642, "09:45"], [696, "09:50"], [811, "10:00"], [871, "10:05"], [930, "10:10"], [995, "10:15"], [1051, "10:20"], [1096, "10:25"], [1142, "10:30"], [1191, "10:35"], [1238, "10:40"], [1285, "10:45"], [1334, "10:50"], [1382, "10:55"], [1428, "11:00", 1], [1497, "11:05"], [1547, "11:10"], [1592, "11:15"], [1637, "11:20"], [1683, "11:25"], [1737, "12:30", 1], [1843, "12:40"], [1889, "12:45"], [1943, "12:50"], [1995, "12:55"], [2044, "13:00", 1], [2093, "13:05"], [2139, "13:10"], [2185, "13:15"], [2225, "13:20"], [2270, "13:25"], [2322, "13:30"], [2369, "13:35"], [2413, "13:40"]];

const FAVS = ["hline", "ray", "alertline", "trend", "up", "note", "rect", "grid", "down", "daterange", "forecastL", "pricerange", "zig", "elliott", "fib", "pin", "forecast", "text", "arrow"];

export default function App() {
  return (
    <Page>
      <Global />
      <TabStrip>
        {TABS.map(([code, up, change, logo, close, mark], i) => (
          <Tab key={code} $active={i === 0} $mark={mark} $line={i > 0}>
            <Logo id={logo} />
            <TabCode>{code}</TabCode>
            <Arrow $up={up} />
            <Change $up={up}>{change}</Change>
            {close ? <Close aria-label="閉じる"><svg width="12" height="12" viewBox="0 0 12 12"><path d="M1.500 1.500l9 9M10.500 1.500l-9 9" stroke="currentColor" strokeWidth="1.200" /></svg></Close> : null}
          </Tab>
        ))}
        <StripEnd>
          <Ico s={16}><path d="M14 3v22M3 14h22" strokeWidth="2" /></Ico>
          <WindowKeys>
            <WindowKey $dim aria-label="モニター">{I.monitor}</WindowKey><Rule />
            <WindowKey $dim aria-label="その他">{I.more}</WindowKey><WindowKey aria-label="最小化">{I.min}</WindowKey><WindowKey aria-label="元に戻す">{I.restore}</WindowKey><WindowKey aria-label="終了">{I.exit}</WindowKey>
          </WindowKeys>
        </StripEnd>
      </TabStrip>

      <Toolbar>
        <Avatar aria-label="メニュー">
          <svg width="26" height="26" viewBox="0 0 26 26"><path d="M9 25c5-4 2-16 7-24" stroke="#b5502a" fill="none" /></svg>
          <Count>11</Count>
        </Avatar>
        <Search>6857<Knob>{I.diamond}</Knob></Search>
        <IconKey $w={44}>{I.plusc}</IconKey>
        <Rule />
        <Intervals>
          {["15秒", "2分", "10分", "30分", "1時間", "4時間", "日", "週", "月"].map((t, i) => <Interval key={t} $on={i === 0}>{t}</Interval>)}
        </Intervals>
        <IconKey $w={28}><Chevron /></IconKey>
        <Rule $gap={2} />
        <IconKey $w={42}>{I.candles}</IconKey>
        <IconKey $w={34} $on>{I.hollow}</IconKey>
        <IconKey $w={30}><Chevron /></IconKey>
        <Rule />
        <TextKey>{I.indicators}インジケーター</TextKey>
        <IconKey $w={34}><Chevron /></IconKey>
        <IconKey $w={28}>{I.apps}</IconKey>
        <Rounds>{[..."024DMWFPOC個VZ"].map((t) => <Round key={t}>{t}</Round>)}</Rounds>
        <Rule />
        <TextKey>{I.alarm}アラート</TextKey>
        <TextKey>{I.rewind}リプレイ</TextKey>
        <IconKey $w={34}><Chevron /></IconKey>
        <Rule />
        <IconKey $w={42}>{I.undo}</IconKey>
        <IconKey $w={34} $dim>{I.redo}</IconKey>
        <Grow />
        <IconKey>{I.layout}</IconKey>
        <LayoutName>JP stocks<Saved>保存</Saved></LayoutName>
        <IconKey $w={22}><Chevron /></IconKey>
        <Initial>J</Initial>
        <Rule />
        <IconKey $w={42}>{I.quick}</IconKey><IconKey>{I.gear}</IconKey><IconKey>{I.full}</IconKey><IconKey>{I.camera}</IconKey>
        <Pill $w={80} $gap={4}>トレード</Pill>
        <Pill $w={52} $gap={8} $solid>投稿</Pill>
      </Toolbar>

      <Body>
        <Side $w={52} $left $pad="8px 0 22px">
          <ToolGroup>
            <Tool $on>{I.cross}</Tool><Tool>{I.trend}</Tool><Tool>{I.fib}</Tool><Tool>{I.xabcd}</Tool>
            <Tool>{I.forecast}</Tool><Tool>{I.rect}</Tool><Tool>{I.note}</Tool><Tool><Heart size={26} strokeWidth={1} /></Tool>
          </ToolGroup>
          <Divider />
          <ToolGroup><Tool>{I.ruler}</Tool><Tool><ZoomIn size={22} strokeWidth={1} /></Tool></ToolGroup>
          <Divider />
          <ToolGroup>
            <Tool>{I.magnet}</Tool><Tool>{I.pencil}</Tool><Tool>{I.lock}</Tool><Tool><Eye size={24} strokeWidth={1} /></Tool>
            <Tool $white><Link2 size={24} strokeWidth={1.1} transform="rotate(-45)" /></Tool>
          </ToolGroup>
          <Divider />
          <Tool><Trash2 size={24} strokeWidth={1} /></Tool>
          <Grow />
          <Tool $white><Star size={24} strokeWidth={1.1} /></Tool>
        </Side>

        <Center>
          <Frame>
            <Plot>
              <Chart />
              <Legend>
                <Logo id="adv" />
                <span>アドバンテスト · 15秒 · TSE</span>
                <Status />
                <Volume>出来高<em>4.8K</em></Volume>
              </Legend>
              <Callout style={{ left: px(1143), top: py(392) }}>27,725</Callout>
              <Watermark width="34" height="20" viewBox="0 0 34 20"><g fill="#d8d8d8"><path d="M1 2h13v16h-6.500v-9.500h-6.500z" /><circle cx="18.500" cy="5" r="3.200" /><path d="M24.500 2h7.500l-7 16h-7.500z" /></g></Watermark>
              <AddAlert style={{ top: py(834) }} aria-label="追加"><Ico s={20} w={1.6}><C x={14} y={14} r={11} /><path d="M14 9v10M9 14h10" /></Ico></AddAlert>
            </Plot>
            <PriceAxis>
              {PRICES.map((p) => <span key={p}>{p}</span>)}
              {TAGS.map(([y, t, bg, fg, strong, w, h]) => <Tag key={t} $bg={bg} $fg={fg} $strong={strong} $w={w} $h={h} style={{ top: py(y) }}>{t}</Tag>)}
            </PriceAxis>
            <TimeAxis>
              {TIMES.map(([x, t, strong]) => <TimeLabel key={t} $strong={strong} style={{ left: px(x) }}>{t}</TimeLabel>)}
              <TimeTag style={{ left: px(748) }}>{"6月 03 (水)   09:55:00"}</TimeTag>
            </TimeAxis>
            <Corner aria-label="設定"><Ico s={18}><path d="M8 4h12l6 10-6 10h-12l-6-10z" strokeWidth="1.800" /><circle cx="14" cy="14" r="3.500" strokeWidth="1.800" /></Ico></Corner>
          </Frame>
          <Footer>
            <Ranges>{["1日", "5日", "1ヶ月", "3ヶ月", "6ヶ月", "年初来", "1年", "5年", "すべて"].map((t) => <button key={t}>{t}</button>)}</Ranges>
            <Rule $gap={8} />
            <IconKey $w={30}>{I.goto}</IconKey>
            <Favourites>
              <Handle>{I.handle}</Handle>
              {FAVS.map((n) => <IconKey key={n}>{I[n]}</IconKey>)}
            </Favourites>
            <Grow />
            <FootText $gap={18}>13:54:42 UTC+9</FootText>
            <FootText $gap={8}>配当調整</FootText>
            <Tool $on>{I.collapse}</Tool>
          </Footer>
        </Center>

        <Side $w={45} $pad="2px 0 5px">
          <Widget>{I.list}</Widget>
          <Widget>{I.clock}<Badge>99+</Badge></Widget>
          <Widget>{I.layers}</Widget>
          <Widget>{I.chat}</Widget>
          <Grow />
          <Widget $h={45}>{I.radar}</Widget><Widget $h={44}>{I.ideas}</Widget><Widget $h={44}>{I.calendar}</Widget>
          <Widget $h={46}>{I.rss}</Widget><Widget>{I.bell}</Widget>
          <Widget><AppsDisc>{I.dots}</AppsDisc></Widget>
          <Divider />
          <Widget $h={38}>{I.help}</Widget>
        </Side>
      </Body>
    </Page>
  );
}
